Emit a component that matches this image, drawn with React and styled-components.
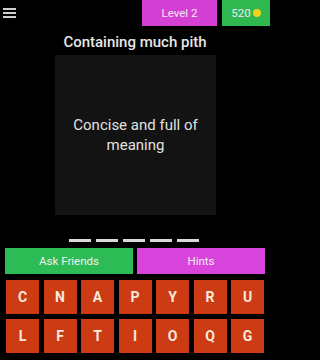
import styled, { createGlobalStyle } from "styled-components";

const Global = createGlobalStyle`
  html, body { margin: 0; padding: 0; background: #000; }
  body { width: 270px; height: 360px; overflow: hidden; font-family: Roboto, "Liberation Sans", sans-serif; }
`;

const Screen = styled.div`
  width: 270px;
  height: 360px;
  background: #000;
  display: flex;
  flex-direction: column;
`;

const TopBar = styled.div`
  height: 26px;
  display: flex;
  align-items: stretch;
`;

const Menu = styled.div`
  width: 13px;
  margin: 8px 0 0 3px;
  height: 10px;
  display: flex;
  flex-direction: column;
  justify-content: space-between;
  span {
    height: 2px;
    background: #cfcfcf;
  }
`;

const Spacer = styled.div`
  flex: 1;
`;

const Pill = styled.div`
  width: ${(p) => p.$w}px;
  margin-left: ${(p) => p.$ml}px;
  background: ${(p) => p.$bg};
  color: #f4e8f4;
  font-size: 11.5px;
  display: flex;
  align-items: center;
  justify-content: center;
  gap: 2px;
`;

const Coin = styled.span`
  width: 8px;
  height: 8px;
  border-radius: 50%;
  background: #f2d21b;
  display: inline-block;
`;

const Clue = styled.div`
  margin-top: 7px;
  text-align: center;
  color: #e6e6e6;
  font-size: 15px;
  font-weight: 500;
  height: 18px;
  line-height: 18px;
`;

const Card = styled.div`
  margin: 4px 0 0 55px;
  width: 161px;
  height: 160px;
  background: #131313;
  display: flex;
  align-items: center;
  justify-content: center;
  text-align: center;
  color: #e2e2e2;
  font-size: 15px;
  line-height: 20px;
  padding: 0 6px;
  box-sizing: border-box;
`;

const Slots = styled.div`
  margin-top: 24px;
  padding-left: 69px;
  display: flex;
  gap: 5px;
`;

const Slot = styled.div`
  width: 22px;
  height: 3px;
  background: #d8d8d8;
`;

const Actions = styled.div`
  margin-top: 6px;
  padding: 0 5px;
  display: flex;
  gap: 4px;
  height: 26px;
`;

const Action = styled.div`
  flex: 1;
  background: ${(p) => p.$bg};
  color: #f0f0f0;
  font-size: 11.5px;
  display: flex;
  align-items: center;
  justify-content: center;
`;

const Keys = styled.div`
  margin-top: 6px;
  padding: 0 6px;
  display: grid;
  grid-template-columns: repeat(7, 33px);
  grid-auto-rows: 34px;
  column-gap: 4.5px;
  row-gap: 5px;
`;

const Key = styled.div`
  background: #cc3b14;
  color: #f6e8dc;
  font-size: 14px;
  font-weight: 700;
  display: flex;
  align-items: center;
  justify-content: center;
`;

const letters = "CNAPYRULFTIOQG".split("");

export default function App() {
  return (
    <Screen>
      <Global />
      <TopBar>
        <Menu>
          <span />
          <span />
          <span />
        </Menu>
        <Spacer />
        <Pill $w={75} $ml={0} $bg="#d43fd4">Level 2</Pill>
        <Pill $w={48} $ml={5} $bg="#2fb84f">
          520 <Coin />
        </Pill>
      </TopBar>
      <Clue>Containing much pith</Clue>
      <Card>Concise and full of meaning</Card>
      <Slots>
        {[0, 1, 2, 3, 4].map((i) => (
          <Slot key={i} />
        ))}
      </Slots>
      <Actions>
        <Action $bg="#2dbb55">Ask Friends</Action>
        <Action $bg="#d843dc">Hints</Action>
      </Actions>
      <Keys>
        {letters.map((l, i) => (
          <Key key={i}>{l}</Key>
        ))}
      </Keys>
    </Screen>
  );
}
